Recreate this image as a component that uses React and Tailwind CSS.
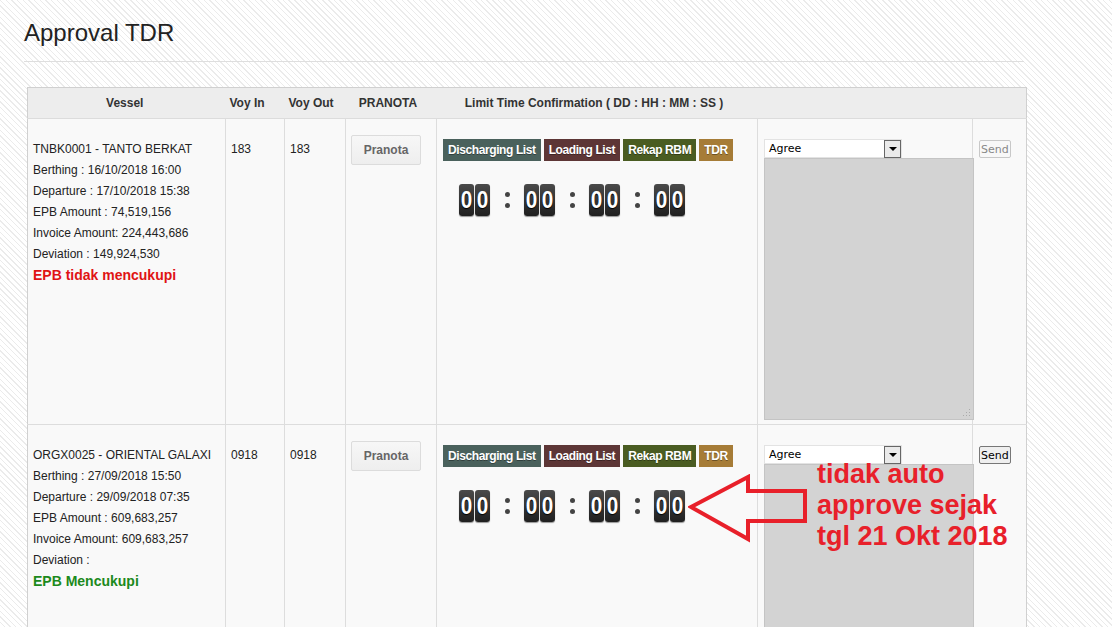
import React from 'react';

const badges = [
  { label: 'Discharging List', cls: 'bg-[#4a615c]' },
  { label: 'Loading List', cls: 'bg-[#5d3636]' },
  { label: 'Rekap RBM', cls: 'bg-[#4a5c22]' },
  { label: 'TDR', cls: 'bg-[#a67c37]' },
];

const rows = [
  {
    code: 'TNBK0001 - TANTO BERKAT',
    berthing: '16/10/2018 16:00',
    departure: '17/10/2018 15:38',
    epb: '74,519,156',
    invoice: '224,443,686',
    deviation: '149,924,530',
    ok: false,
    voyIn: '183',
    voyOut: '183',
    sendEnabled: false,
  },
  {
    code: 'ORGX0025 - ORIENTAL GALAXI',
    berthing: '27/09/2018 15:50',
    departure: '29/09/2018 07:35',
    epb: '609,683,257',
    invoice: '609,683,257',
    deviation: '',
    ok: true,
    voyIn: '0918',
    voyOut: '0918',
    sendEnabled: true,
  },
];

const Digit = () => (
  <div className="w-[15px] h-[32px] rounded-[3px] bg-gradient-to-b from-[#4a4a4a] to-[#202020] flex items-center justify-center text-white font-bold text-[23px] leading-none [text-shadow:0_1px_1px_#000] shadow-[0_1px_1px_rgba(0,0,0,0.4)]">
    <span className="scale-x-90">0</span>
  </div>
);

const Colon = () => (
  <div className="w-[34px] h-[32px] flex flex-col items-center justify-center gap-[6px]">
    <span className="w-[5px] h-[5px] rounded-full bg-[#444]" />
    <span className="w-[5px] h-[5px] rounded-full bg-[#444]" />
  </div>
);

const Countdown = () => (
  <div className="flex items-center ml-[16px] mt-[23px]">
    <div className="flex gap-[1px]"><Digit /><Digit /></div>
    <Colon />
    <div className="flex gap-[1px]"><Digit /><Digit /></div>
    <Colon />
    <div className="flex gap-[1px]"><Digit /><Digit /></div>
    <Colon />
    <div className="flex gap-[1px]"><Digit /><Digit /></div>
  </div>
);

const Row = ({ r, first }) => (
  <tr className={first ? '' : 'border-t border-[#ddd]'}>
    <td className="align-top bg-[#f9f9f9] border-r border-[#ddd] pl-[5px] pt-[20px] h-[306px]">
      <div className="text-[12px] leading-[21px] text-[#222]">
        <div>{r.code}</div>
        <div>Berthing : {r.berthing}</div>
        <div>Departure : {r.departure}</div>
        <div>EPB Amount : {r.epb}</div>
        <div>Invoice Amount: {r.invoice}</div>
        <div>Deviation : {r.deviation}</div>
        {r.ok ? (
          <div className="text-[14px] font-bold text-[#1c8a1c]">EPB Mencukupi</div>
        ) : (
          <div className="text-[14px] font-bold text-[#e01414]">EPB tidak mencukupi</div>
        )}
      </div>
    </td>
    <td className="align-top bg-[#f9f9f9] border-r border-[#ddd] pl-[5px] pt-[20px] text-[12px] leading-[21px] text-[#222]">
      {r.voyIn}
    </td>
    <td className="align-top bg-[#f9f9f9] border-r border-[#ddd] pl-[5px] pt-[20px] text-[12px] leading-[21px] text-[#222]">
      {r.voyOut}
    </td>
    <td className="align-top bg-[#f9f9f9] border-r border-[#ddd] pl-[5px] pt-[16px]">
      <button className="block w-[70px] h-[30px] rounded-[2px] border border-[#dcdcdc] bg-gradient-to-b from-[#f7f7f7] to-[#eeeeee] text-[12px] font-bold text-[#666]">
        Pranota
      </button>
    </td>
    <td className="align-top bg-[#f9f9f9] border-r border-[#ddd] pl-[6px] pt-[20px]">
      <div className="flex gap-[3px]">
        {badges.map((b) => (
          <span
            key={b.label}
            className={`${b.cls} h-[22px] px-[5px] flex items-center text-white text-[12px] font-bold tracking-[-0.4px] [text-shadow:0_1px_0_rgba(0,0,0,0.35)]`}
          >
            {b.label}
          </span>
        ))}
      </div>
      <Countdown />
    </td>
    <td className="align-top bg-[#f9f9f9] border-r border-[#ddd] pl-[6px] pt-[20px]">
      <div className="w-[138px] h-[19px] bg-white border border-[#e3e3e3] flex items-center justify-between font-['DejaVu_Sans',sans-serif] text-[11px] text-black">
        <span className="pl-[4px] pt-[2px]">Agree</span>
        <span className="w-[17px] h-[18px] border border-[#666] bg-[#eaeaea] flex items-center justify-center">
          <span className="w-0 h-0 border-l-[4px] border-r-[4px] border-t-[4px] border-l-transparent border-r-transparent border-t-black" />
        </span>
      </div>
      <div className="relative w-[210px] h-[262px] bg-[#d3d3d3] border border-[#c4c4c4]">
        <svg className="absolute right-[2px] bottom-[2px]" width="8" height="8" viewBox="0 0 8 8">
          <rect x="6" y="0" width="1" height="1" fill="#aaa" />
          <rect x="3" y="3" width="1" height="1" fill="#aaa" />
          <rect x="6" y="3" width="1" height="1" fill="#aaa" />
          <rect x="0" y="6" width="1" height="1" fill="#aaa" />
          <rect x="3" y="6" width="1" height="1" fill="#aaa" />
          <rect x="6" y="6" width="1" height="1" fill="#aaa" />
        </svg>
      </div>
    </td>
    <td className="align-top bg-[#f9f9f9] pl-[6px] pt-[21px]">
      <button
        className={
          r.sendEnabled
            ? 'block h-[18px] px-[1px] rounded-[2px] border border-[#777] bg-[#efefef] font-[DejaVu_Sans] text-[11px] leading-none text-black'
            : 'block h-[18px] px-[1px] rounded-[2px] border border-[#c8c8c8] bg-[#f8f8f8] font-[DejaVu_Sans] text-[11px] leading-none text-[#888]'
        }
      >
        Send
      </button>
    </td>
  </tr>
);

export default function App() {
  return (
    <div className="relative w-[1112px] h-[627px] overflow-hidden font-['Liberation_Sans',Arial,sans-serif] bg-[repeating-linear-gradient(45deg,#ffffff_0px,#ffffff_3px,#ebebeb_3px,#ebebeb_4px)]">
      <div className="pl-[24px] pt-[19px]">
        <h1 className="text-[24px] leading-[28px] text-[#222]">Approval TDR</h1>
        <div className="w-[1000px] h-[1px] bg-[#dedede] mt-[14px]" />
        <table className="table-fixed border-collapse ml-[3px] mt-[25px] w-[999px] border border-[#d0d0d0]">
          <colgroup>
            <col className="w-[198px]" />
            <col className="w-[59px]" />
            <col className="w-[61px]" />
            <col className="w-[91px]" />
            <col className="w-[321px]" />
            <col className="w-[215px]" />
            <col className="w-[54px]" />
          </colgroup>
          <thead>
            <tr className="bg-[#ededed] border-b border-[#dcdcdc] h-[31px] text-[12px] font-bold text-[#333]">
              <th className="text-center pr-[4px]">Vessel</th>
              <th className="text-center pr-[16px]">Voy In</th>
              <th className="text-center pr-[8px]">Voy Out</th>
              <th className="text-center pr-[6px]">PRANOTA</th>
              <th className="text-center pr-[6px] whitespace-nowrap">Limit Time Confirmation ( DD : HH : MM : SS )</th>
              <th />
              <th />
            </tr>
          </thead>
          <tbody>
            {rows.map((r, i) => (
              <Row key={r.code} r={r} first={i === 0} />
            ))}
          </tbody>
        </table>
      </div>

      <svg className="absolute left-[688px] top-[474px]" width="122" height="70" viewBox="0 0 122 70">
        <polygon
          points="3,33 60,3 60,17 117,17 117,47 60,47 60,65"
          fill="none"
          stroke="#e8202a"
          strokeWidth="4"
          strokeLinejoin="miter"
        />
      </svg>
      <div className="absolute left-[817px] top-[459px] text-[27px] leading-[31px] font-bold text-[#e8202a]">
        <div>tidak auto</div>
        <div>approve sejak</div>
        <div>tgl 21 Okt 2018</div>
      </div>
    </div>
  );
}
